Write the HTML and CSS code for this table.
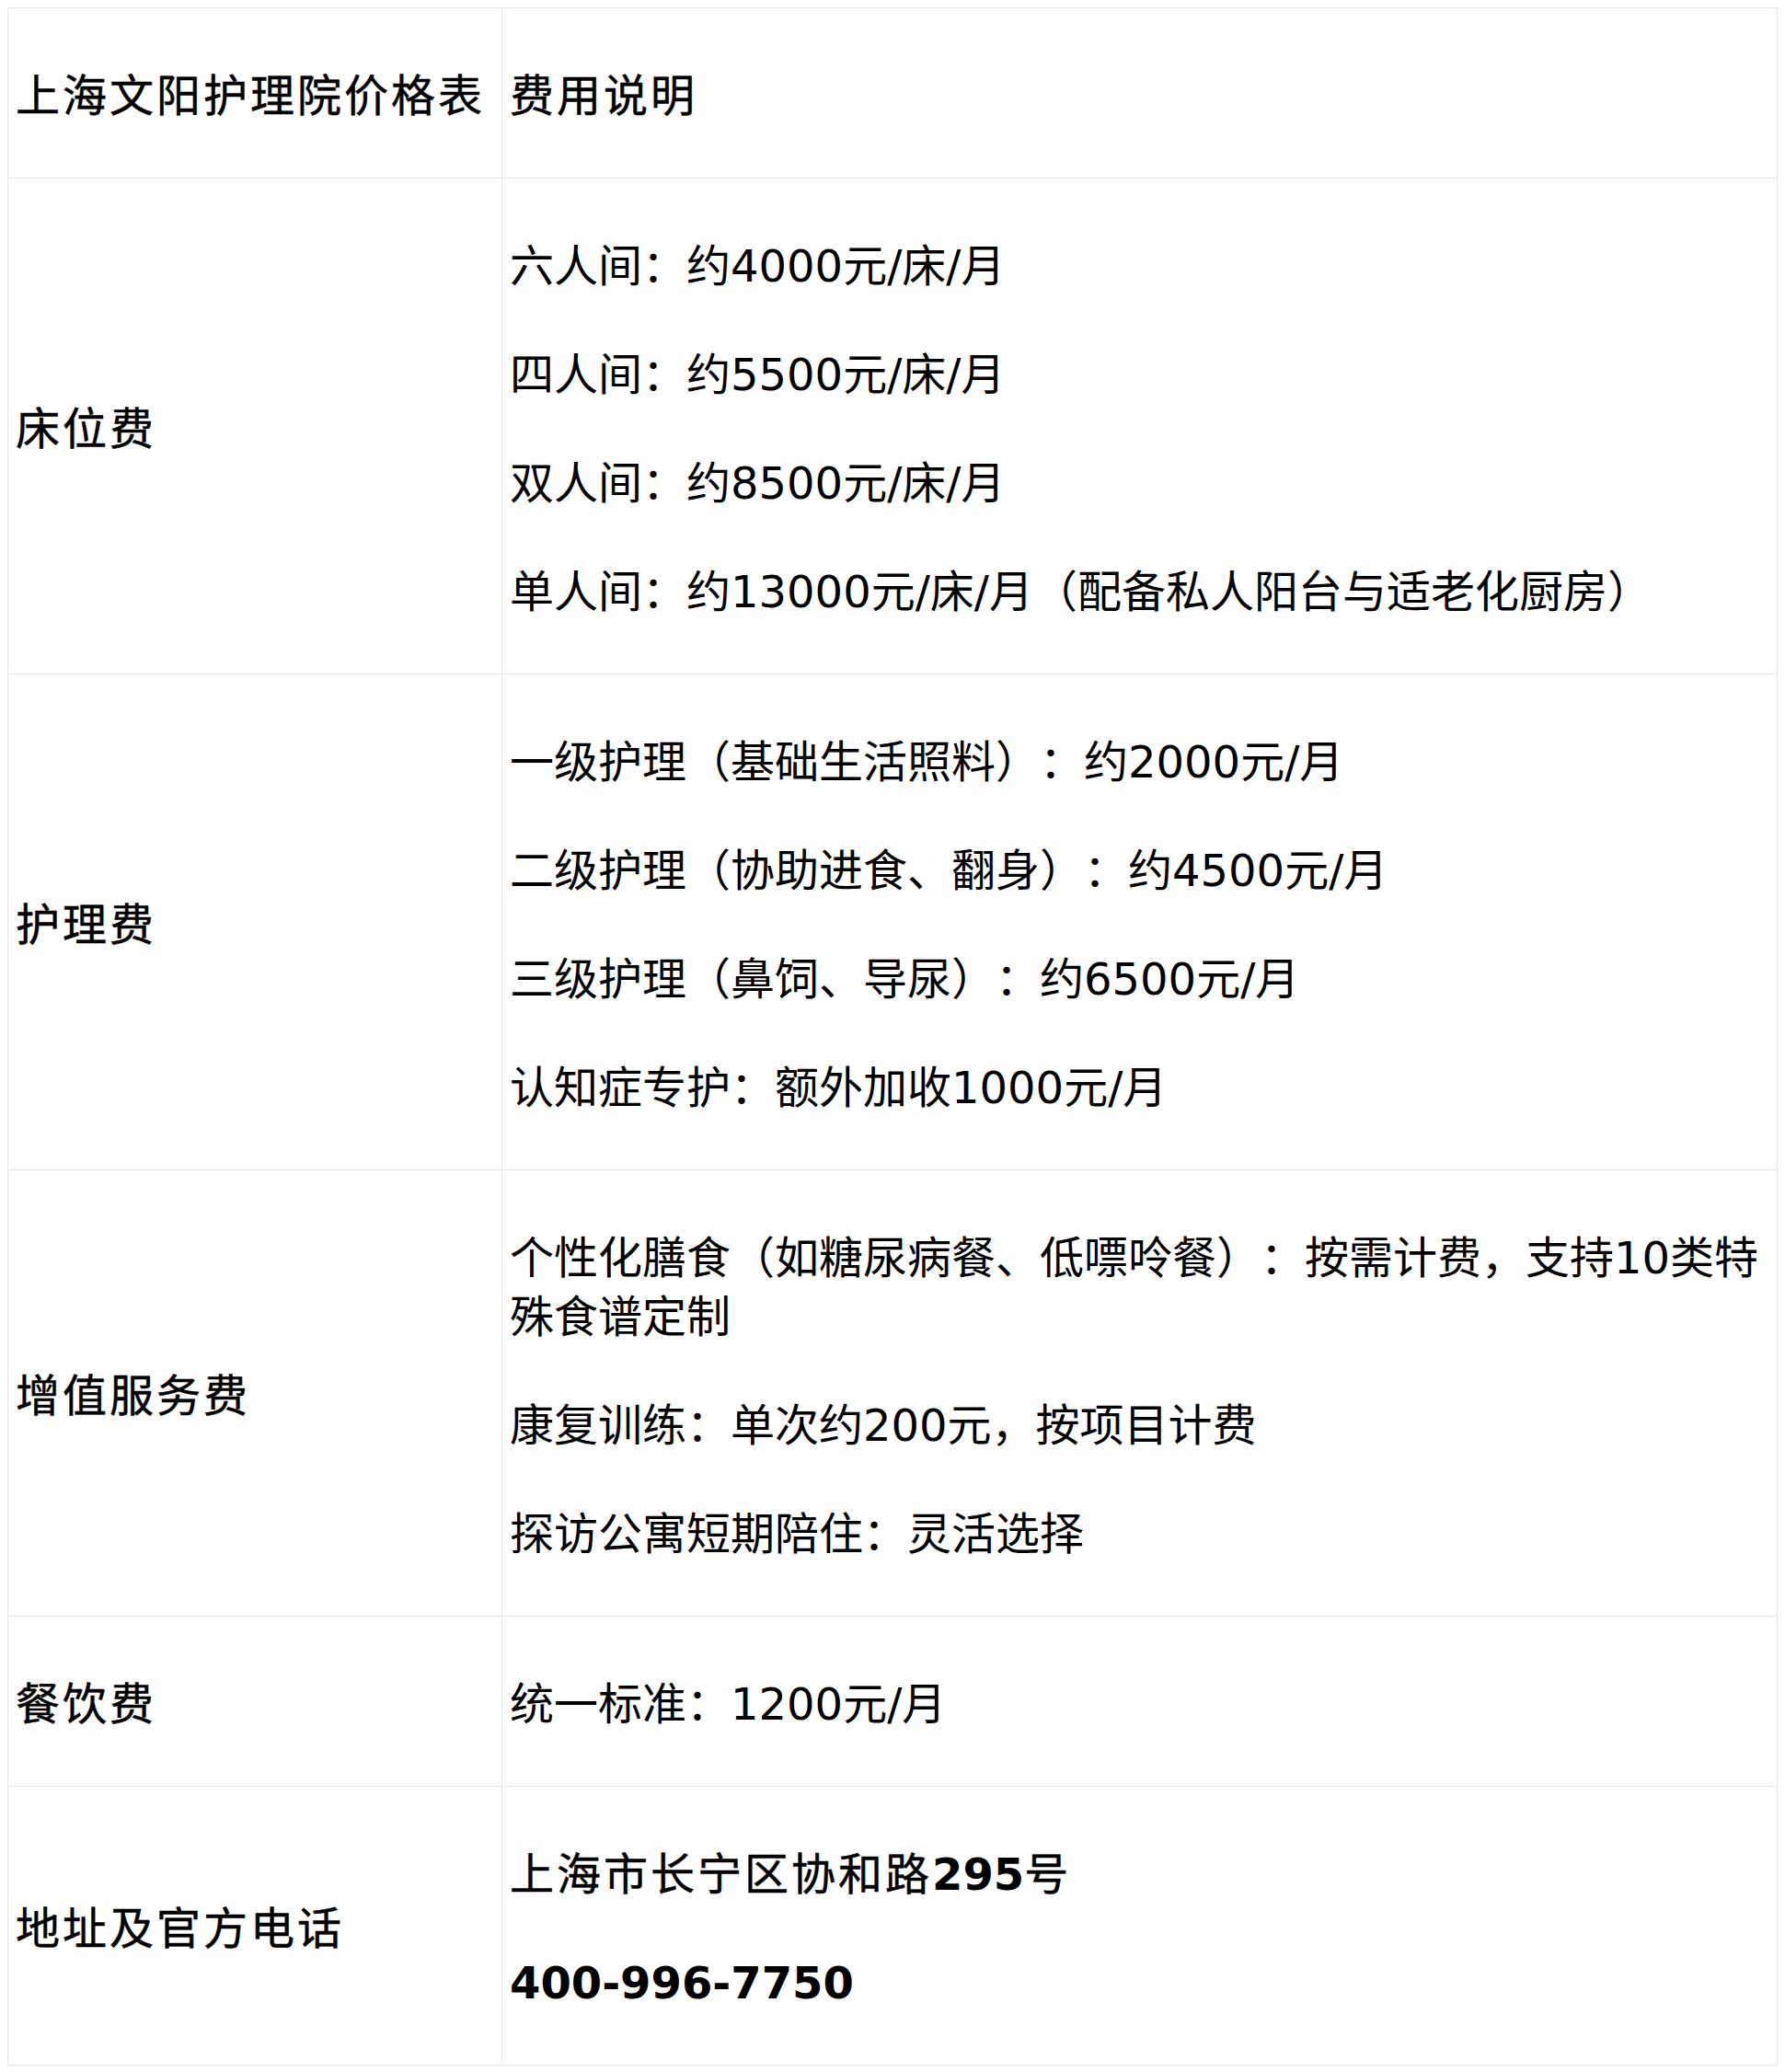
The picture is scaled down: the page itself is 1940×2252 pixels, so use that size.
FILE: index.html
```html
<!DOCTYPE html>
<html lang="zh-CN">
<head>
<meta charset="utf-8">
<title>上海文阳护理院价格表</title>
<link rel="stylesheet" href="styles.css">
</head>
<body>
<table class="price-table">
  <thead>
    <tr>
      <th class="label"><p>上海文阳护理院价格表</p></th>
      <th class="desc"><p>费用说明</p></th>
    </tr>
  </thead>
  <tbody>
    <tr>
      <td class="label"><p>床位费</p></td>
      <td class="desc">
        <p>六人间：约4000元/床/月</p>
        <p>四人间：约5500元/床/月</p>
        <p>双人间：约8500元/床/月</p>
        <p>单人间：约13000元/床/月（配备私人阳台与适老化厨房）</p>
      </td>
    </tr>
    <tr>
      <td class="label"><p>护理费</p></td>
      <td class="desc">
        <p>一级护理（基础生活照料）：约2000元/月</p>
        <p>二级护理（协助进食、翻身）：约4500元/月</p>
        <p>三级护理（鼻饲、导尿）：约6500元/月</p>
        <p>认知症专护：额外加收1000元/月</p>
      </td>
    </tr>
    <tr>
      <td class="label"><p>增值服务费</p></td>
      <td class="desc">
        <p>个性化膳食（如糖尿病餐、低嘌呤餐）：按需计费，支持10类特殊食谱定制</p>
        <p>康复训练：单次约200元，按项目计费</p>
        <p>探访公寓短期陪住：灵活选择</p>
      </td>
    </tr>
    <tr>
      <td class="label"><p>餐饮费</p></td>
      <td class="desc">
        <p>统一标准：1200元/月</p>
      </td>
    </tr>
    <tr>
      <td class="label"><p>地址及官方电话</p></td>
      <td class="desc">
        <p><span class="cjk-bold">上海市长宁区协和路</span><strong>295</strong><span class="cjk-bold">号</span></p>
        <p><strong>400-996-7750</strong></p>
      </td>
    </tr>
  </tbody>
</table>
</body>
</html>
```
FILE: styles.css
```css
html, body {
  background: #ffffff;
}

body {
  margin: 8px;
  color: #000000;
  font-family: "DejaVu Sans", "Noto Sans CJK SC", sans-serif;
  font-size: 48px;
  line-height: 64px;
  text-spacing-trim: space-all;
}

.price-table {
  width: 100%;
  border-collapse: collapse;
}

.price-table th,
.price-table td {
  border: 1px solid #e5e7eb;
  padding: 9px 8px 3px;
  text-align: left;
  vertical-align: middle;
  font-weight: 400;
}

.price-table .label {
  width: 520px;
}

.price-table p {
  margin: 54px 0;
}

/* header cells and row labels: synthetic-bold look of the CJK face */
.price-table th p,
.price-table .label p,
.cjk-bold {
  letter-spacing: 3px;
  -webkit-text-stroke: 0.5px #000000;
}

.price-table strong {
  font-weight: 700;
}
```
